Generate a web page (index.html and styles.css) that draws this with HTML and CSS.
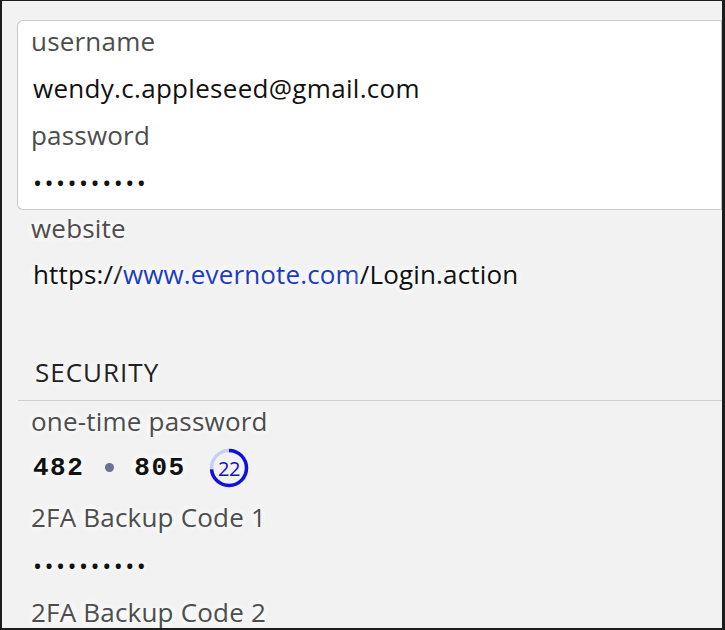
FILE: index.html
```html
<!DOCTYPE html>
<html lang="en">
<head>
<meta charset="UTF-8">
<meta name="viewport" content="width=device-width, initial-scale=1.0">
<title>Evernote login</title>
<link rel="stylesheet" href="styles.css">
</head>
<body>

<div class="window">
    <div class="card">
        <div class="label first">username</div>
        <div class="value">wendy.c.appleseed@gmail.com</div>
        <div class="label">password</div>
        <div class="value dots">••••••••••</div>
    </div>

    <div class="plain">
        <div class="label first">website</div>
        <div class="value url">https://<span class="link">www.evernote.com</span>/Login.action</div>
    </div>

    <div class="section-head">SECURITY</div>

    <div class="plain">
        <div class="label first">one-time password</div>
        <div class="otp">
            <span class="otp-code">482</span>
            <span class="otp-sep"></span>
            <span class="otp-code">805</span>
            <svg class="timer" width="40" height="40" viewBox="0 0 40 40">
                <circle cx="20" cy="20" r="17.5" fill="none" stroke="#c8cff5" stroke-width="3.5"/>
                <circle cx="20" cy="20" r="17.5" fill="none" stroke="#1010dc" stroke-width="3.5"
                        stroke-dasharray="80.6 110" transform="rotate(-90 20 20)"/>
                <text x="20" y="27.5" text-anchor="middle" class="timer-text">22</text>
            </svg>
        </div>
        <div class="label after-otp">2FA Backup Code 1</div>
        <div class="value dots">••••••••••</div>
        <div class="label">2FA Backup Code 2</div>
    </div>
</div>

</body>
</html>
```

FILE: styles.css
```css
html, body {
    margin: 0;
    padding: 0;
}
body {
    font-family: 'Open Sans', 'Noto Sans', sans-serif;
    background-color: #1a1a1a;
}
.window {
    width: 725px;
    height: 630px;
    box-sizing: border-box;
    border: solid #1c1c1c;
    border-width: 1px 3px 2px 2px;
    background-color: #f2f2f2;
    overflow: hidden;
}
.card {
    margin: 19px 0 0 15px;
    padding: 0 13px 3px;
    background-color: #fff;
    border: 1px solid #c9c9c9;
    border-right-color: #bdbdbd;
    border-radius: 6px 0 0 6px;
}
.plain {
    padding-left: 29px;
}
.label {
    font-size: 26px;
    line-height: 40px;
    padding-top: 3px;
    color: #4d4d4d;
    letter-spacing: 0.2px;
    text-shadow: 0 0 8px #fff, 0 0 10px #fff, 0 0 12px #fff;
}
.label.first {
    padding-top: 0;
}
.value {
    font-size: 26px;
    line-height: 47px;
    letter-spacing: 0.3px;
    padding-top: 4px;
    padding-left: 2px;
    color: #111;
    text-shadow: 0 0 8px #fff, 0 0 10px #fff, 0 0 12px #fff;
}
.plain .label.first {
    margin-top: -2px;
}
.url {
    padding-top: 3px;
    letter-spacing: 0.15px;
}
.link {
    color: #1a3cc4;
}
.dots {
    font-size: 24px;
    letter-spacing: 2.5px;
    padding-left: 2px;
}
.section-head {
    margin: 54px 0 0 16px;
    padding: 0 0 8px 17px;
    font-size: 26px;
    line-height: 40px;
    letter-spacing: 1px;
    color: #222;
    border-bottom: 1px solid #cfcfcf;
    text-shadow: 0 0 8px #fff, 0 0 12px #fff;
}
.section-head + .plain .label.first {
    margin-top: 0;
    padding-top: 0;
}
.otp {
    display: flex;
    align-items: center;
    height: 47px;
    padding: 3px 0 0 2px;
}
.otp-code {
    font-family: 'Liberation Mono', monospace;
    font-weight: bold;
    font-size: 26px;
    letter-spacing: 1.5px;
    color: #111;
    text-shadow: 0 0 8px #fff, 0 0 12px #fff;
}
.otp-sep {
    width: 9px;
    height: 9px;
    border-radius: 50%;
    background-color: #6d7190;
    margin: 0 20px 0 21px;
}
.timer {
    margin-left: 23px;
}
.timer-text {
    font-family: 'Open Sans', sans-serif;
    font-size: 20px;
    letter-spacing: -0.5px;
    fill: #1010c8;
}
.after-otp {
    padding-top: 6px;
}
.after-otp + .dots {
    padding-top: 5px;
}
```
